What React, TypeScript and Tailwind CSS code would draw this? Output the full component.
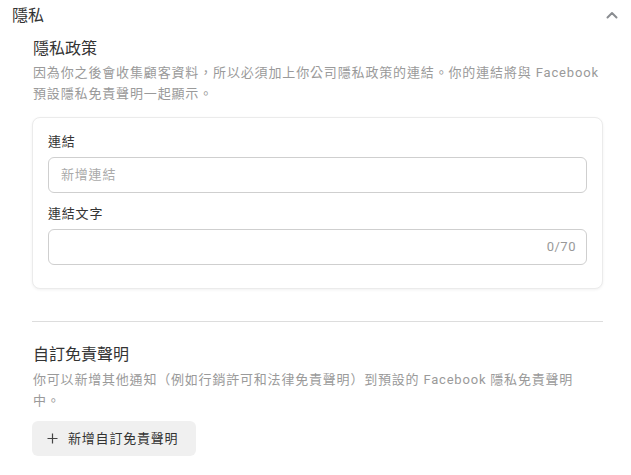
import React from "react";

export default function App() {
  return (
    <div
      lang="zh-TW"
      className="w-[631px] h-[475px] bg-white overflow-hidden text-[#333]"
      style={{ fontFamily: 'Roboto, "Noto Sans CJK TC", "Noto Sans", sans-serif' }}
    >
      <div className="flex items-center justify-between pl-[12px] pr-[13px] pt-[6px]">
        <h2 className="text-[16px] leading-[20px] font-normal text-[#333]">隱私</h2>
        <svg width="12" height="8" viewBox="0 0 12 8" className="mt-[-3px]">
          <path d="M1.5 6.5 L6 2 L10.5 6.5" fill="none" stroke="#8a8d91" strokeWidth="2" strokeLinecap="round" strokeLinejoin="round" />
        </svg>
      </div>
      <div className="pl-[32px] pr-[28px]">
        <h3 className="mt-[13px] pl-[1px] text-[16px] leading-[20px] font-normal text-[#333]">隱私政策</h3>
        <p className="mt-[3px] pl-[1px] text-[13px] leading-[21px] text-[#9a9a9a] tracking-[0.85px] whitespace-nowrap">
          因為你之後會收集顧客資料，所以必須加上你公司隱私政策的連結。你的連結將與 Facebook
          <br />
          預設隱私免責聲明一起顯示。
        </p>
        <div className="mt-[13px] rounded-[8px] border border-[#ebebeb] bg-white px-[15px] pt-[14px] pb-[23px] shadow-[0_1px_3px_rgba(0,0,0,0.06)]">
          <label className="block text-[13px] leading-[20px] text-[#333] tracking-[0.8px]">連結</label>
          <div className="mt-[5px] flex h-[36px] items-center rounded-[6px] border border-[#cfcfcf] px-[12px]">
            <span className="text-[13px] text-[#aaa] tracking-[0.8px]">新增連結</span>
          </div>
          <label className="mt-[11px] block text-[13px] leading-[20px] text-[#333] tracking-[0.8px]">連結文字</label>
          <div className="mt-[5px] flex h-[36px] items-center justify-end rounded-[6px] border border-[#cfcfcf] px-[10px]">
            <span className="text-[13px] text-[#999] tracking-[0.5px]">0/70</span>
          </div>
        </div>
        <div className="mt-[32px] border-t border-[#dddddd]" />
        <h3 className="mt-[23px] pl-[1px] text-[16px] leading-[20px] font-normal text-[#333]">自訂免責聲明</h3>
        <p className="mt-[4px] pl-[1px] text-[13px] leading-[21px] text-[#9a9a9a] tracking-[0.8px] whitespace-nowrap">
          你可以新增其他通知（例如行銷許可和法律免責聲明）到預設的 Facebook 隱私免責聲明
          <br />
          中。
        </p>
        <button className="mt-[10px] flex h-[35px] w-[164px] items-center rounded-[6px] bg-[#f0f0f0] pl-[15px] text-[13px] text-[#333]">
          <svg width="11" height="11" viewBox="0 0 11 11" className="mr-[10px]">
            <path d="M5.5 0.5 V10.5 M0.5 5.5 H10.5" stroke="#444" strokeWidth="1.2" />
          </svg>
          <span className="tracking-[0.8px]">新增自訂免責聲明</span>
        </button>
      </div>
    </div>
  );
}
